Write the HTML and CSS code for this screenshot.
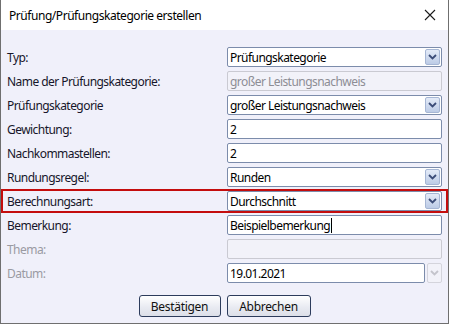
FILE: index.html
```html
<!DOCTYPE html>
<html lang="de">
<head>
<meta charset="utf-8">
<title>Prüfung/Prüfungskategorie erstellen</title>
<link rel="stylesheet" href="styles.css">
</head>
<body>
<div class="window">
  <div class="titlebar">
    <span class="title">Prüfung/Prüfungskategorie erstellen</span>
    <svg class="close" width="12" height="12" viewBox="0 0 12 12"><path d="M1 1L11 11M11 1L1 11" stroke="#1a1a1a" stroke-width="1.1" fill="none"/></svg>
  </div>
  <div class="content">
    <div class="row">
      <span class="label">Typ:</span>
      <div class="field select"><span class="value">Prüfungskategorie</span><span class="dd"><svg width="9" height="6" viewBox="0 0 9 6"><path d="M1 1L4.5 4.5L8 1" stroke="#3b4c78" stroke-width="1.8" fill="none"/></svg></span></div>
    </div>
    <div class="row">
      <span class="label">Name der Prüfungskategorie:</span>
      <div class="field disabled"><span class="value">großer Leistungsnachweis</span></div>
    </div>
    <div class="row">
      <span class="label">Prüfungskategorie</span>
      <div class="field select"><span class="value">großer Leistungsnachweis</span><span class="dd"><svg width="9" height="6" viewBox="0 0 9 6"><path d="M1 1L4.5 4.5L8 1" stroke="#3b4c78" stroke-width="1.8" fill="none"/></svg></span></div>
    </div>
    <div class="row">
      <span class="label">Gewichtung:</span>
      <div class="field"><span class="value">2</span></div>
    </div>
    <div class="row">
      <span class="label">Nachkommastellen:</span>
      <div class="field"><span class="value">2</span></div>
    </div>
    <div class="row">
      <span class="label">Rundungsregel:</span>
      <div class="field select"><span class="value">Runden</span><span class="dd"><svg width="9" height="6" viewBox="0 0 9 6"><path d="M1 1L4.5 4.5L8 1" stroke="#3b4c78" stroke-width="1.8" fill="none"/></svg></span></div>
    </div>
    <div class="row highlight">
      <span class="label">Berechnungsart:</span>
      <div class="field select"><span class="value">Durchschnitt</span><span class="dd"><svg width="9" height="6" viewBox="0 0 9 6"><path d="M1 1L4.5 4.5L8 1" stroke="#3b4c78" stroke-width="1.8" fill="none"/></svg></span></div>
    </div>
    <div class="row">
      <span class="label">Bemerkung:</span>
      <div class="field"><span class="value">Beispielbemerkung</span><span class="caret"></span></div>
    </div>
    <div class="row">
      <span class="label muted">Thema:</span>
      <div class="field disabled"></div>
    </div>
    <div class="row">
      <span class="label muted">Datum:</span>
      <div class="datefield">
        <div class="field date"><span class="value">19.01.2021</span></div>
        <span class="dd off"><svg width="9" height="6" viewBox="0 0 9 6"><path d="M1 1L4.5 4.5L8 1" stroke="#c4c4cc" stroke-width="1.8" fill="none"/></svg></span>
      </div>
    </div>
    <div class="buttons">
      <button class="btn btn-ok">Bestätigen</button>
      <button class="btn btn-cancel">Abbrechen</button>
    </div>
  </div>
</div>
</body>
</html>
```

FILE: styles.css
```css
* { box-sizing: border-box; }
html, body { margin: 0; padding: 0; }
body {
  width: 449px;
  height: 324px;
  overflow: hidden;
  font-family: "Noto Sans", "Open Sans", sans-serif;
  font-size: 12px;
  letter-spacing: -0.55px;
  color: #111;
}
.window {
  width: 449px;
  height: 324px;
  border: 1px solid #6f6f6f;
  border-top: none;
  display: flex;
  flex-direction: column;
  background: #f0f0fa;
}
.titlebar {
  height: 30px;
  background: #fff;
  display: flex;
  align-items: center;
  justify-content: space-between;
  padding: 0 12px 0 8px;
}
.title { font-size: 12px; color: #000; letter-spacing: -0.45px; }
.close { display: block; }
.content {
  flex: 1;
  padding: 17px 2px 0 2px;
  display: flex;
  flex-direction: column;
  gap: 4px;
}
.row {
  display: grid;
  grid-template-columns: 220px 215px;
  align-items: center;
  height: 20px;
  padding-left: 4px;
}
.row.highlight {
  outline: 2px solid #c40d0d;
  outline-offset: 0;
}
.label { color: #16162a; white-space: nowrap; }
.label.muted { color: #9a9aa2; }
.field {
  height: 20px;
  background: #fff;
  border: 1px solid #7c8cab;
  border-radius: 2px;
  display: flex;
  align-items: center;
  padding-left: 2px;
  position: relative;
}
.value { white-space: nowrap; color: #000; }
.field.disabled {
  background: #f2f2f9;
  border-color: #cacad2;
}
.field.disabled .value { color: #8d8d95; }
.dd {
  position: absolute;
  right: 1px;
  top: 1px;
  width: 15px;
  height: 16px;
  border: 1px solid #a6b6d4;
  border-radius: 2px;
  background: linear-gradient(#e4ebf8, #bccbe6);
  display: flex;
  align-items: center;
  justify-content: center;
}
.dd svg { display: block; }
.caret {
  width: 1px;
  height: 15px;
  background: #000;
  margin-left: 1px;
}
.datefield {
  display: flex;
  gap: 2px;
  height: 20px;
}
.field.date { flex: 1; }
.dd.off {
  position: static;
  height: 20px;
  width: 15px;
  background: #f2f2f9;
  border-color: #d4d4dc;
}
.buttons {
  display: flex;
  justify-content: center;
  gap: 6px;
  margin-top: 8px;
}
.btn {
  height: 22px;
  font-family: inherit;
  font-size: 12px;
  letter-spacing: -0.3px;
  color: #111;
  border: 1px solid #2d3c5c;
  border-radius: 3px;
  background: linear-gradient(#ffffff, #e9ebf2 55%, #dcdfe8);
  padding: 0;
}
.btn-ok { width: 82px; }
.btn-cancel { width: 84px; }
```
